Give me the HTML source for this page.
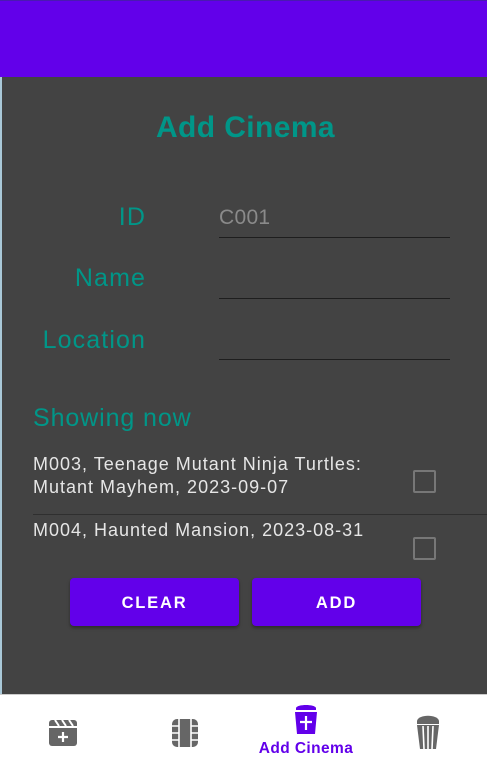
<!DOCTYPE html>
<html><head><style>
body{margin:0;width:487px;height:770px;position:relative;background:#434343;font-family:"Liberation Sans",sans-serif;overflow:hidden}
.a{position:absolute}
.top{left:0;top:0;width:487px;height:77px;background:#6200ea;border-top:1px solid #4a1ab0;box-sizing:border-box}
.lbl{color:#009688;font-size:25px;letter-spacing:1.1px;text-align:right;width:146px;left:0}
.inp{left:219px;width:231px;border-bottom:1px solid #1e1e1e;height:0}
.txt{color:#e6e6e6;font-size:18px;letter-spacing:1px;line-height:23px;left:33px;white-space:nowrap}
.cb{width:19px;height:19px;border:2px solid #777;border-radius:2px;left:413px}
.btn{top:578px;height:48px;width:169px;background:#6200ea;border-radius:4px;color:#fff;font-weight:bold;font-size:16.5px;letter-spacing:1.8px;text-align:center;line-height:50px;box-shadow:0 2px 3px rgba(0,0,0,.35)}
.nav{left:0;top:694px;width:487px;height:76px;background:#fff;border-top:1px solid #ccc}
</style></head><body>
<div class="a top"></div>
<div class="a" style="left:0;top:77px;width:2px;height:617px;background:#a9c8d8"></div>
<div class="a" style="left:0;top:110px;width:491px;text-align:center;color:#009688;font-weight:bold;font-size:30px;letter-spacing:0.4px;line-height:36px">Add Cinema</div>
<div class="a lbl" style="top:203px">ID</div>
<div class="a lbl" style="top:264px">Name</div>
<div class="a lbl" style="top:326px">Location</div>
<div class="a" style="left:219px;top:206px;color:#8a8a8a;font-size:21px;letter-spacing:0.3px">C001</div>
<div class="a inp" style="top:237px"></div>
<div class="a inp" style="top:298px"></div>
<div class="a inp" style="top:359px"></div>
<div class="a" style="left:33px;top:404px;color:#009688;font-size:25px;letter-spacing:0.9px">Showing now</div>
<div class="a txt" style="top:453px">M003, Teenage Mutant Ninja Turtles:<br>Mutant Mayhem, 2023-09-07</div>
<div class="a cb" style="top:470px"></div>
<div class="a" style="left:33px;top:514px;width:454px;height:1px;background:#2f2f2f"></div>
<div class="a txt" style="top:519px">M004, Haunted Mansion, 2023-08-31</div>
<div class="a cb" style="top:537px"></div>
<div class="a btn" style="left:70px">CLEAR</div>
<div class="a btn" style="left:252px">ADD</div>
<div class="a nav"></div>
<svg class="a" style="left:47px;top:717px" width="32" height="32" viewBox="0 0 32 32"><path d="M2 6a3 3 0 0 1 3-3h22a3 3 0 0 1 3 3v3H2z" fill="#666"/><path d="M8 3l4 6M15 3l4 6M22 3l4 6" stroke="#fff" stroke-width="2"/><path d="M2 11h28v15a3 3 0 0 1-3 3H5a3 3 0 0 1-3-3z" fill="#666"/><path d="M16 15v10M11 20h10" stroke="#fff" stroke-width="2.2"/></svg>
<svg class="a" style="left:171px;top:717px" width="28" height="32" viewBox="0 0 28 32"><rect x="1" y="2" width="26" height="28" rx="5" fill="#666"/><path d="M8 2v28M20 2v28M1 9h7M1 16h7M1 23h7M20 9h7M20 16h7M20 23h7" stroke="#fff" stroke-width="1.6"/></svg>
<svg class="a" style="left:294px;top:704px" width="24" height="32" viewBox="0 0 24 32"><path d="M2 4c1-4 19-4 20 0v2H2z" fill="#6200ea"/><path d="M1 8h22l-2 22H3z" fill="#6200ea"/><path d="M12 12v14M6 18h12" stroke="#fff" stroke-width="2.2"/></svg>
<div class="a" style="left:246px;top:740px;width:120px;text-align:center;color:#6200ea;font-weight:bold;font-size:15.5px;letter-spacing:0.4px">Add Cinema</div>
<svg class="a" style="left:416px;top:715px" width="24" height="35" viewBox="0 0 24 35"><path d="M1 6c1-7 21-7 22 0v3H1z" fill="#666"/><path d="M1 10h22l-3 24H4z" fill="#666"/><path d="M7 11l1 23M12 11v23M17 11l-1 23" stroke="#fff" stroke-width="1.6"/></svg>
</body></html>
